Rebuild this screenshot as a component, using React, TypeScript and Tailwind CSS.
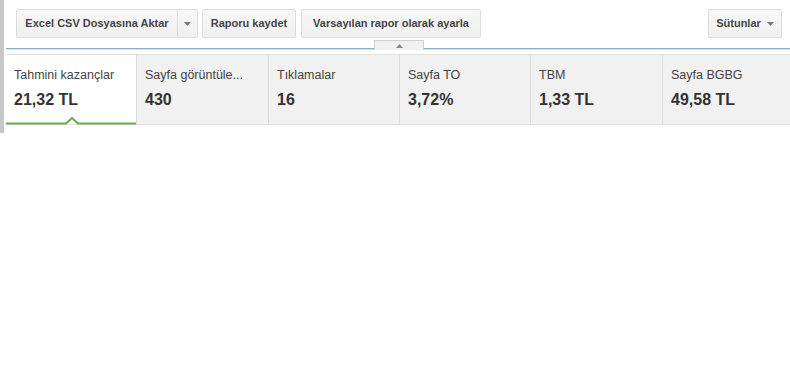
import React from "react";

const METRICS = [
  { label: "Tahmini kazançlar", value: "21,32 TL" },
  { label: "Sayfa görüntüle...", value: "430" },
  { label: "Tıklamalar", value: "16" },
  { label: "Sayfa TO", value: "3,72%" },
  { label: "TBM", value: "1,33 TL" },
  { label: "Sayfa BGBG", value: "49,58 TL" },
];

const BTN =
  "h-[29px] px-[8px] shrink-0 whitespace-nowrap flex items-center text-[11px] font-bold text-[#444] bg-gradient-to-b from-[#f7f7f7] to-[#f0f0f0] border border-[#dcdcdc] rounded-[2px]";

function Caret() {
  return (
    <svg width="7" height="4" viewBox="0 0 7 4" className="shrink-0">
      <path d="M0 0h7L3.5 4z" fill="#777" />
    </svg>
  );
}

export default function App() {
  return (
    <div
      className="w-[790px] h-[384px] bg-white flex overflow-hidden"
      style={{ fontFamily: '"Liberation Sans", Arial, sans-serif' }}
    >
      <div className="w-[4px] h-[133px] bg-[#c8c8c8] shrink-0" />
      <div className="flex-1 ml-[2px]">
        {/* toolbar */}
        <div className="flex justify-between pt-[9px] pl-[10px] pr-[8px]">
          <div className="flex gap-[4px]">
            <div className="flex">
              <button className={BTN + " w-[162px] justify-center rounded-r-none"}>
                Excel CSV Dosyasına Aktar
              </button>
              <button className={BTN + " w-[20px] justify-center px-0 border-l-0 rounded-l-none"}>
                <Caret />
              </button>
            </div>
            <button className={BTN + " w-[94px] justify-center px-0"}>Raporu kaydet</button>
            <button className={BTN + " w-[180px] justify-center px-0 ml-[1px]"}>
              Varsayılan rapor olarak ayarla
            </button>
          </div>
          <button className={BTN + " w-[74px] justify-center gap-[6px] px-0"}>
            Sütunlar
            <Caret />
          </button>
        </div>

        {/* divider with collapse tab */}
        <div className="relative mt-[10px]">
          <div className="h-[1px] bg-[#8ea8d0]" />
          <div className="h-[1px] bg-[#dbe3ef]" />
          <div className="absolute left-[368px] top-[-8px] w-[50px] h-[10px] bg-[#f1f1f1] border border-b-0 border-[#cfcfcf] flex items-center justify-center">
            <svg width="7" height="4" viewBox="0 0 7 4">
              <path d="M0 4h7L3.5 0z" fill="#888" />
            </svg>
          </div>
        </div>

        {/* metric tabs */}
        <div className="mt-[4px] grid grid-cols-[130px_132px_131px_131px_132px_128px] h-[71px] border-t border-b border-[#e2e2e2]">
          {METRICS.map((m, i) => (
            <div
              key={m.label}
              className={
                "relative pl-[8px] pt-[12px] " +
                (i === 0 ? "bg-white" : "bg-[#f1f1f1] border-l border-[#dcdcdc]")
              }
            >
              <div className="text-[12.5px] text-[#444] leading-[16px] whitespace-nowrap">{m.label}</div>
              <div className="mt-[7px] text-[16px] font-bold text-[#333] leading-[19px]">{m.value}</div>
              {i === 0 && (
                <svg
                  className="absolute left-0 bottom-[-1px]"
                  width="130"
                  height="9"
                  viewBox="0 0 130 9"
                >
                  <path
                    d="M0 7.5H60L66 2L72 7.5H130"
                    fill="none"
                    stroke="#6aab4f"
                    strokeWidth="2"
                  />
                </svg>
              )}
            </div>
          ))}
        </div>
      </div>
    </div>
  );
}
